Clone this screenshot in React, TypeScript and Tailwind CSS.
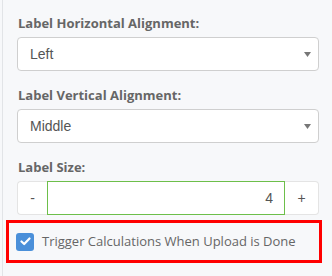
import React from "react";

const labelCls =
  "block text-[13px] leading-[18px] font-bold text-[#666] mb-[5px] pl-px";

function Caret() {
  return (
    <svg width="7" height="5" viewBox="0 0 7 5" className="shrink-0">
      <path d="M0 0 H7 L3.5 5 Z" fill="#777" />
    </svg>
  );
}

function SelectBox({ value }: { value: string }) {
  return (
    <div className="flex h-[34px] items-center justify-between rounded-[4px] border border-[#cfcfcf] bg-white pl-[12px] pr-[7px]">
      <span className="text-[14px] text-[#555] font-['Liberation_Sans',Arial,sans-serif]">
        {value}
      </span>
      <Caret />
    </div>
  );
}

export default function App() {
  return (
    <div className="h-[276px] w-[332px] bg-[#f7f8fa] pl-[2px] font-['Open_Sans',sans-serif]">
      <div className="h-full border-l border-[#e2e4e7] pt-[14px] pr-[10px] pl-[3px]">
        <div className="pl-[11px] pr-[3px]">
          <label className={labelCls}>Label Horizontal Alignment:</label>
          <SelectBox value="Left" />

          <label className={labelCls + " mt-[15px]"}>Label Vertical Alignment:</label>
          <SelectBox value="Middle" />

          <label className={labelCls + " mt-[15px]"}>Label Size:</label>
          <div className="flex h-[34px] text-[14px] text-[#555] font-['Liberation_Sans',Arial,sans-serif]">
            <div className="flex w-[30px] items-center justify-center rounded-l-[4px] border border-r-0 border-[#e4e4e4] bg-white">
              -
            </div>
            <div className="flex flex-1 items-center justify-end border border-[#6dbf4a] bg-white pr-[11px]">
              4
            </div>
            <div className="flex w-[34px] items-center justify-center rounded-r-[4px] border border-l-0 border-[#e4e4e4] bg-white">
              +
            </div>
          </div>
        </div>

        <div className="mt-[5px] flex h-[43px] items-center border-[3px] border-[#ff0000] pl-[7px]">
          <span className="flex h-[18px] w-[18px] shrink-0 items-center justify-center rounded-[3px] bg-[#4a8fd9]">
            <svg width="11" height="9" viewBox="0 0 11 9">
              <path d="M1.5 4.5 L4.2 7 L9.5 1.5" fill="none" stroke="#fff" strokeWidth="2.2" strokeLinecap="round" strokeLinejoin="round" />
            </svg>
          </span>
          <span className="ml-[8px] whitespace-nowrap text-[13px] text-[#666]">
            Trigger Calculations When Upload is Done
          </span>
        </div>
      </div>
    </div>
  );
}
